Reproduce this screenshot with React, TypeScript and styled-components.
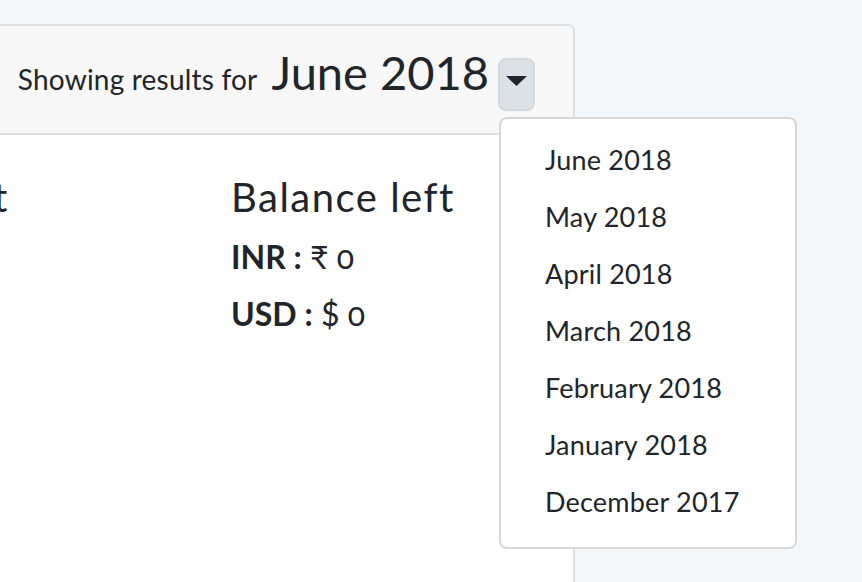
import React from "react";
import styled, { createGlobalStyle } from "styled-components";

const GlobalStyle = createGlobalStyle`
  html, body {
    margin: 0;
    padding: 0;
    background: #f4f7fa;
    overflow: hidden;
  }
  body {
    font-family: Lato, "Noto Sans", "DejaVu Sans", sans-serif;
    color: #212529;
  }
  * { box-sizing: border-box; }
`;

const Page = styled.div`
  width: 862px;
  height: 582px;
  overflow: hidden;
  padding-top: 24px;
`;

const Card = styled.div`
  margin-left: -286px;
  width: 861px;
  height: 700px;
  background: #ffffff;
  border: 2px solid #dddfe1;
  border-radius: 7px;
`;

const CardHeader = styled.div`
  display: flex;
  justify-content: flex-end;
  align-items: baseline;
  padding: 18px 38px 22px 0;
  background: #f7f7f7;
  border-bottom: 2px solid #dfdfdf;
  border-radius: 5px 5px 0 0;
`;

const Label = styled.span`
  font-size: 28px;
  line-height: 1.2;
  letter-spacing: 0.2px;
  margin-right: 14px;
`;

const Month = styled.span`
  font-size: 47px;
  line-height: 1.2;
  margin-right: 9px;
`;

const DropdownWrap = styled.div`
  position: relative;
  align-self: flex-start;
  margin-top: 14px;
`;

const ToggleButton = styled.button`
  display: flex;
  align-items: center;
  justify-content: center;
  width: 37px;
  height: 53px;
  padding: 0 0 8px;
  background: #dce1e6;
  border: 2px solid #d4d9de;
  border-radius: 8px;
  cursor: pointer;
`;

const Menu = styled.ul`
  position: absolute;
  top: calc(100% + 6px);
  left: 1px;
  width: 298px;
  margin: 0;
  padding: 12px 0 17px;
  list-style: none;
  background: #ffffff;
  border: 2px solid #d6d6d6;
  border-radius: 8px;
  z-index: 10;
`;

const MenuItem = styled.li`
  padding: 8px 44px;
  font-size: 27px;
  line-height: 41px;
  letter-spacing: 0.2px;
  white-space: nowrap;
  color: #212529;
`;

const CardBody = styled.div`
  display: grid;
  grid-template-columns: 489px 1fr;
  padding: 38px 26px;
`;

const Column = styled.div`
  display: flex;
  flex-direction: column;
`;

const ColumnTitle = styled.h2`
  margin: 0 0 7px;
  font-size: 40px;
  font-weight: 400;
  line-height: 1.2;
  letter-spacing: 1.5px;
  white-space: nowrap;
`;

const AmountRow = styled.div`
  font-size: 32px;
  line-height: 57px;
  white-space: nowrap;
`;

const Currency = styled.b`
  font-weight: 700;
`;

const Value = styled.span`
  font-variant-numeric: oldstyle-nums;
`;

const months = [
  "June 2018",
  "May 2018",
  "April 2018",
  "March 2018",
  "February 2018",
  "January 2018",
  "December 2017",
];

const columns = [
  { title: "Amount spent", rows: [["INR", "₹", "0"], ["USD", "$", "0"]] },
  { title: "Balance left", rows: [["INR", "₹", "0"], ["USD", "$", "0"]] },
];

export default function App() {
  return (
    <Page>
      <GlobalStyle />
      <Card>
        <CardHeader>
          <Label>Showing results for</Label>
          <Month>June 2018</Month>
          <DropdownWrap>
            <ToggleButton aria-label="Choose month">
              <svg width="21" height="10" viewBox="0 0 21 10">
                <path d="M0 0 L21 0 L10.5 10 Z" fill="#212529" />
              </svg>
            </ToggleButton>
            <Menu>
              {months.map((m) => (
                <MenuItem key={m}>{m}</MenuItem>
              ))}
            </Menu>
          </DropdownWrap>
        </CardHeader>
        <CardBody>
          {columns.map((c) => (
            <Column key={c.title}>
              <ColumnTitle>{c.title}</ColumnTitle>
              {c.rows.map(([code, sym, val]) => (
                <AmountRow key={code}>
                  <Currency>{code} :</Currency> {sym} <Value>{val}</Value>
                </AmountRow>
              ))}
            </Column>
          ))}
        </CardBody>
      </Card>
    </Page>
  );
}
